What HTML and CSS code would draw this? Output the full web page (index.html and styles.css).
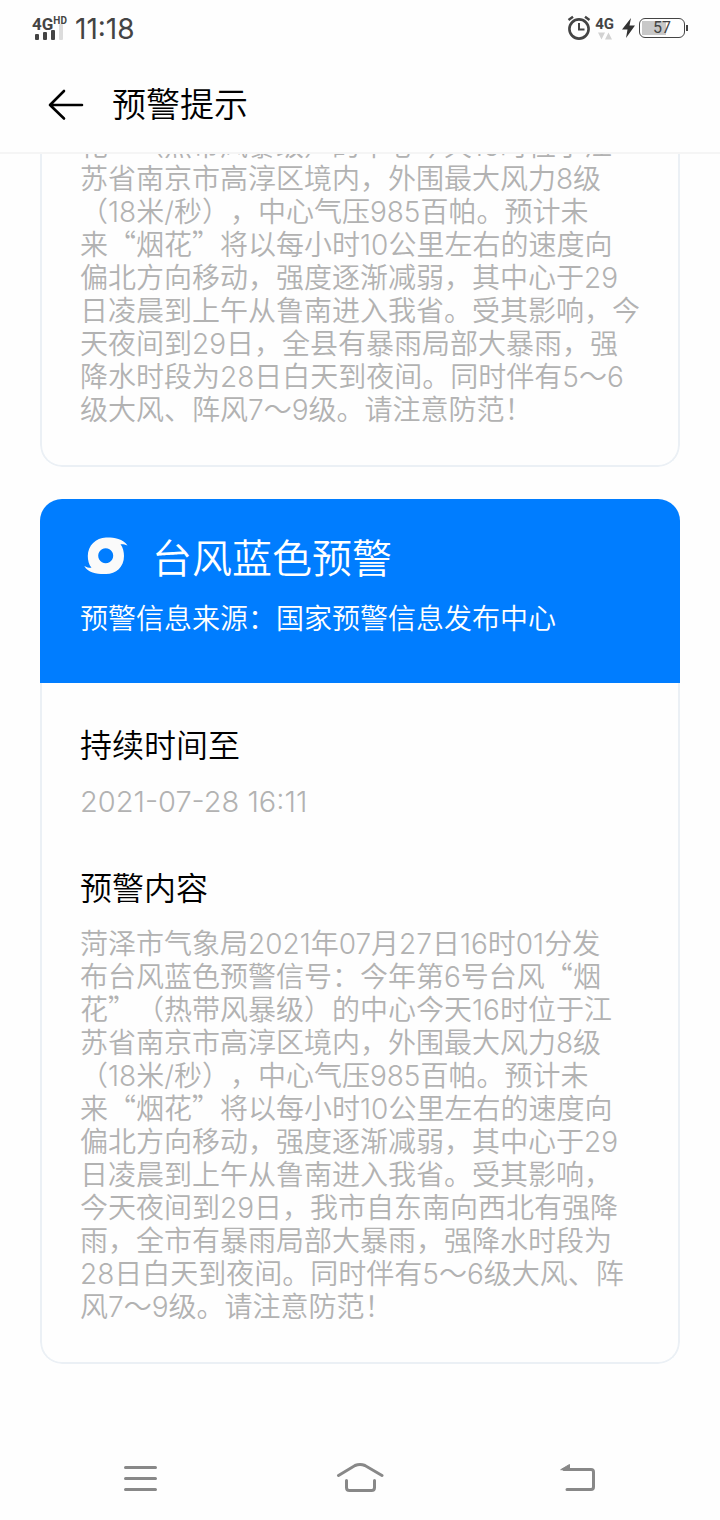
FILE: index.html
```html
<!DOCTYPE html>
<html lang="zh-CN">
<head>
  <meta charset="UTF-8">
  <meta name="viewport" content="width=device-width, initial-scale=1">
  <title>预警提示</title>
  <link rel="stylesheet" href="styles.css">
</head>
<body>
<!--状态栏-->
<div class="status">
  <div class="signal">
    <div class="net">4G<sup>HD</sup></div>
    <svg width="30" height="16" viewBox="0 0 30 16">
      <g fill="#444">
        <rect x="0" y="10" width="4" height="6" rx="1"/>
        <rect x="8" y="8" width="4" height="8" rx="1"/>
        <rect x="16" y="6" width="4" height="10" rx="1"/>
      </g>
      <rect x="24" y="0" width="4" height="16" rx="1" fill="#dcdcdc"/>
    </svg>
  </div>
  <span class="time">11:18</span>
  <div class="status-right">
    <svg width="24" height="26" viewBox="0 0 24 26" fill="none" stroke="#444">
      <circle cx="12" cy="14" r="9.6" stroke-width="2.6"/>
      <path d="M12 8v6.5h5.5" stroke-width="2"/>
      <path d="M1.500 5L6 1.800M22.500 5L18 1.800" stroke-width="2.400"/>
    </svg>
    <div class="data">
      <span>4G</span>
      <svg width="14" height="8" viewBox="0 0 14 8" fill="#d2d2d2">
        <path d="M0 0.500h7L3.500 7.500zM7 7.500h7L10.500 0.500z"/>
      </svg>
    </div>
    <svg width="13" height="20" viewBox="0 0 13 20" fill="#333">
      <path d="M9 0L0 11.500h5.500L4 20 13 7.500H7.500z"/>
    </svg>
    <div class="battery"><span>57</span></div>
  </div>
</div>

<header class="header">
  <a class="back" href="#" aria-label="返回">
    <svg width="36" height="32" viewBox="0 0 36 32" fill="none" stroke="#000" stroke-width="2.600" stroke-linecap="round" stroke-linejoin="round">
      <path d="M34 16H2M16 2L2 16l14 13.500"/>
    </svg>
  </a>
  <h1>预警提示</h1>
</header>

<!--预警列表-->
<main class="list">
  <section class="card">
    <div class="card-body">
      <p class="text">花<q>”</q>（热带风暴级）的中心今天16时位于江<br>苏省南京市高淳区境内，外围最大风力8级<br>（18米/秒），中心气压985百帕。预计未<br>来<q>“</q>烟花<q>”</q>将以每小时10公里左右的速度向偏北方向移动，强度逐渐减弱，其中心于29日凌晨到上午从鲁南进入我省。受其影响，今天夜间到29日，全县有暴雨局部大暴雨，强降水时段为28日白天到夜间。同时伴有5～6级大风、阵风7～9级。请注意防范！</p>
    </div>
  </section>

  <section class="card">
    <div class="card-head">
      <h2>
        <svg width="44" height="38" viewBox="0 0 44 38">
          <path fill="#fafafa" fill-rule="evenodd" d="M22 0.500C28 0.300 39 1 43.500 8.500C41 7.500 38.500 7 36.500 7.300C39 10.500 40 15 40 19C40 30 32 37 22 37C15 37.300 4 36.500 0.300 29C3 30.500 5.500 31 7.500 30.800C4.800 27.500 3.800 23 3.800 19C3.800 8.500 12 0.800 22 0.500ZM21.700 11.300a7.500 7.500 0 1 0 0.010 0Z"/>
        </svg>
        台风蓝色预警
      </h2>
      <p>预警信息来源：国家预警信息发布中心</p>
    </div>
    <div class="card-body">
      <h3>持续时间至</h3>
      <p class="text date">2021-07-28 16:11</p>
      <h3>预警内容</h3>
      <p class="text">菏泽市气象局2021年07月27日16时01分发<br>布台风蓝色预警信号：今年第6号台风<q>“</q>烟<br>花<q>”</q>（热带风暴级）的中心今天16时位于江<br>苏省南京市高淳区境内，外围最大风力8级<br>（18米/秒），中心气压985百帕。预计未<br>来<q>“</q>烟花<q>”</q>将以每小时10公里左右的速度向偏北方向移动，强度逐渐减弱，其中心于29日凌晨到上午从鲁南进入我省。受其影响，<br>今天夜间到29日，我市自东南向西北有强降雨，全市有暴雨局部大暴雨，强降水时段为28日白天到夜间。同时伴有5～6级大风、阵风7～9级。请注意防范！</p>
    </div>
  </section>
</main>

<!--底部导航键-->
<nav class="keys">
  <button type="button" aria-label="菜单">
    <svg width="48" height="32" viewBox="0 0 48 32" fill="none" stroke="#888" stroke-width="3" stroke-linecap="round">
      <path d="M9.500 5.500h30M9.500 16.500h30M9.500 27.500h30"/>
    </svg>
  </button>
  <button type="button" aria-label="主页">
    <svg width="48" height="32" viewBox="0 0 48 32" fill="none" stroke="#888" stroke-width="3" stroke-linecap="round">
      <path d="M2.500 13.500L19 3.500Q24 1.500 29 3.500L46 13.500M10.500 18.500v7q0 3 3 3h22q3 0 3-3v-7"/>
    </svg>
  </button>
  <button type="button" aria-label="返回上一级">
    <svg width="48" height="32" viewBox="0 0 48 32" fill="none" stroke="#888" stroke-width="3" stroke-linecap="round">
      <path d="M8 7.500h27q2.500 0 2.500 2.500v15q0 2.500-2.500 2.500H11"/>
      <path d="M5 7.500L13.500 2.500v5z" fill="#888" stroke-width="1"/>
    </svg>
  </button>
</nav>
</body>
</html>
```
FILE: styles.css
```css
* {
  margin: 0;
  padding: 0;
  box-sizing: border-box;
}

body {
  display: flex;
  flex-direction: column;
  height: 100vh;
  background-color: #fefefe;
  color: #000;
  font-family: Inter, "Noto Sans CJK SC", sans-serif;
  font-weight: 350;
  text-spacing-trim: space-all;
}

h1, h2, h3 {
  font-weight: 350;
}

svg {
  display: block;
}

/* 状态栏 */
.status {
  display: flex;
  align-items: center;
  flex: none;
  height: 56px;
  padding: 0 32px;
  color: #444;
}

.signal {
  width: 36px;
}

.signal svg {
  margin: -8px 0 0 3px;
}

.net {
  font-family: Roboto, sans-serif;
  font-size: 17px;
  line-height: 16px;
  font-weight: 700;
  white-space: nowrap;
}

.net sup {
  font-size: 10px;
  line-height: 10px;
  vertical-align: top;
}

.time {
  margin-left: 7px;
  padding-top: 2px;
  font-size: 28px;
  font-weight: 400;
}

.status-right {
  display: flex;
  align-items: center;
  gap: 4px;
  margin-left: auto;
}

.data {
  display: flex;
  flex-direction: column;
  align-items: center;
  margin-right: 4px;
  font-family: Roboto, sans-serif;
  font-size: 15px;
  line-height: 16px;
  font-weight: 700;
}

.battery {
  position: relative;
  width: 46px;
  height: 20px;
  margin-right: 3px;
  border: 1px solid #444;
  border-radius: 6px;
  background: linear-gradient(#c8c8c8, #c8c8c8) 2px 2px / 24px 14px no-repeat;
  font-family: Roboto, sans-serif;
  font-size: 16px;
  line-height: 18px;
  font-weight: 400;
  text-align: center;
}

.battery::after {
  content: "";
  position: absolute;
  top: 6px;
  right: -4px;
  width: 2px;
  height: 6px;
  background-color: #444;
}

/* 标题栏 */
.header {
  display: flex;
  align-items: center;
  gap: 28px;
  flex: none;
  height: 98px;
  padding: 2px 48px 0;
  border-bottom: 2px solid #f5f5f5;
}

.header h1 {
  font-size: 34px;
  line-height: 40px;
}

/* 预警列表，停在最底部 */
.list {
  display: flex;
  flex-direction: column;
  justify-content: flex-end;
  gap: 32px;
  flex: 1;
  min-height: 0;
  padding: 0 40px 72px;
  overflow: hidden;
}

.card {
  flex: none;
  border-radius: 22px;
  overflow: hidden;
}

.card-head {
  padding: 40px 40px 48px;
  background-color: #007dff;
  color: #fff;
}

.card-head h2 {
  display: flex;
  align-items: center;
  gap: 24px;
  padding-left: 4px;
  font-size: 40px;
  line-height: 40px;
}

.card-head h2 svg {
  margin-top: -6px;
}

.card-head p {
  margin-top: 24px;
  font-size: 28px;
  line-height: 32px;
}

.card-body {
  padding: 0 38px 38px;
  border: 2px solid #ebf0f5;
  border-top: 0;
  border-radius: 0 0 22px 22px;
}

.card-head + .card-body {
  padding-top: 44px;
}

.card-body h3 {
  margin-bottom: 20px;
  font-size: 32px;
  line-height: 38px;
}

.text + h3 {
  margin-top: 52px;
}

.text {
  color: #b2b2b2;
  font-size: 28px;
  line-height: 33px;
}

.date {
  font-size: 29px;
}

/* 引号用中文全角字形 */
.text q {
  font-family: "Noto Sans CJK SC", sans-serif;
  line-height: 1;
  quotes: none;
}

/* 底部导航键 */
.keys {
  display: flex;
  justify-content: center;
  gap: 172px;
  flex: none;
  height: 84px;
}

.keys button {
  display: flex;
  align-items: center;
  border: 0;
  background: none;
  cursor: pointer;
}
```
